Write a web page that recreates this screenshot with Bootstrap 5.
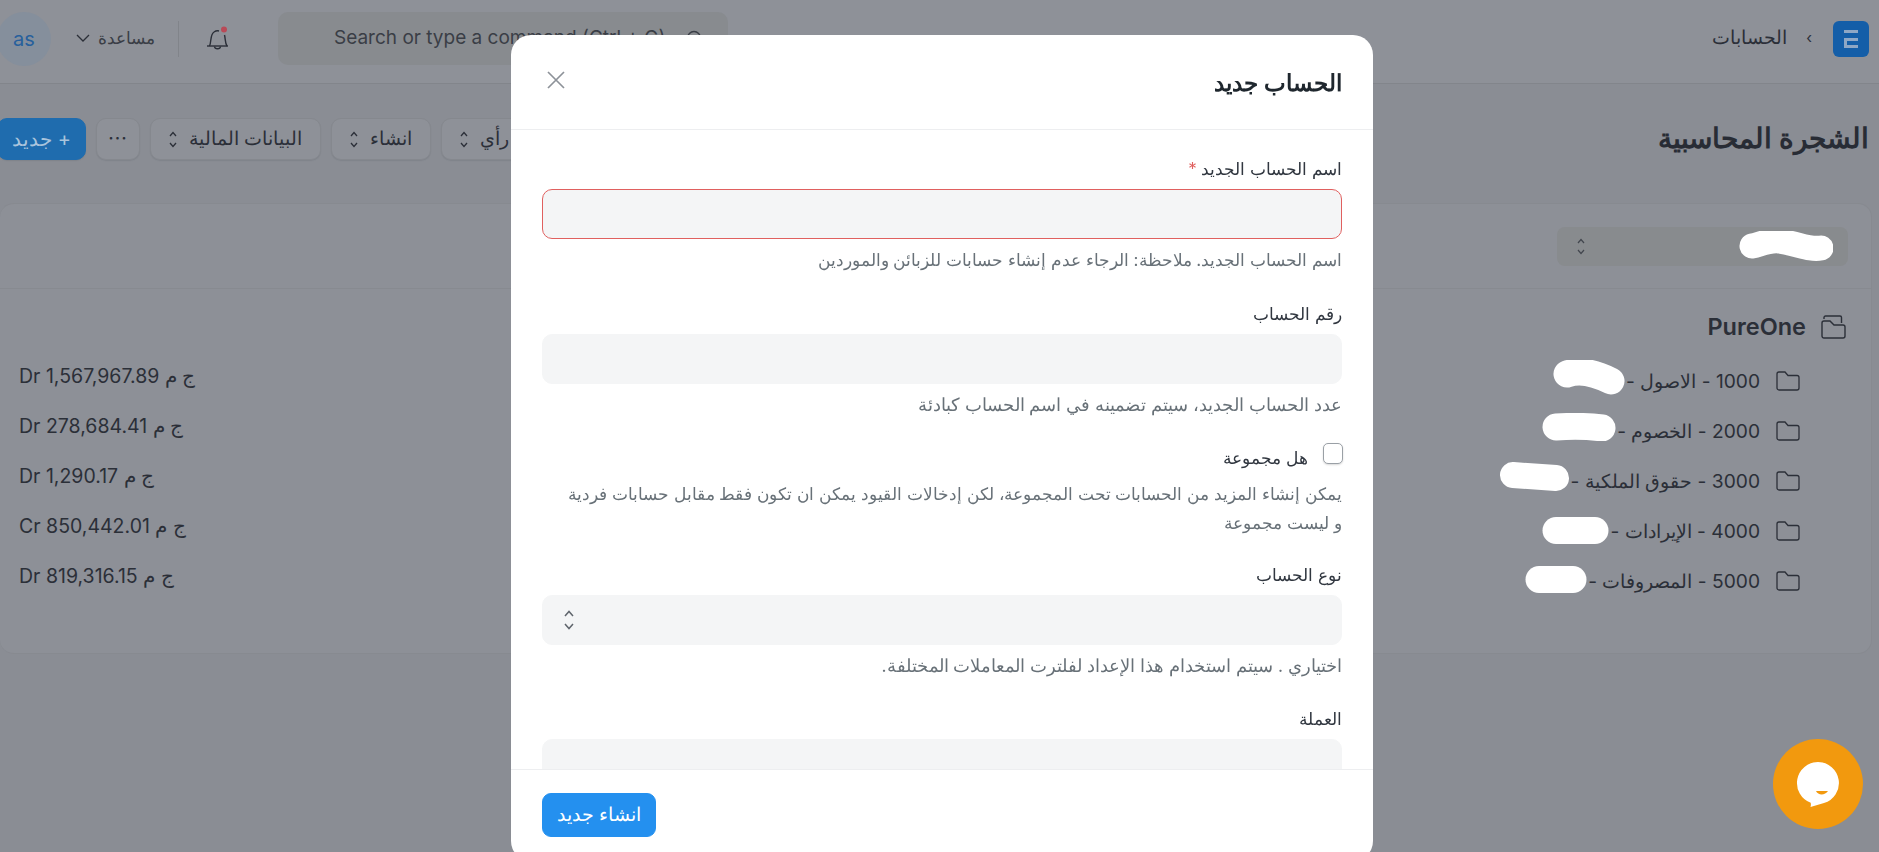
<!DOCTYPE html>
<html lang="ar" dir="rtl">
<head>
<meta charset="utf-8">
<title>الشجرة المحاسبية</title>
<link rel="stylesheet" href="https://cdn.jsdelivr.net/npm/bootstrap@5.3.0/dist/css/bootstrap.min.css">
<style>
html,body{height:100%;overflow:hidden}
body{background:#8a8d94;color:#2b2f38;font-family:Inter,"Noto Sans",sans-serif;font-size:17px}
.app-top{height:84px;padding:0 10px 6px 0;background:#8e9198;border-bottom:1px solid #82858b}
.brand-box{width:36px;height:36px;border-radius:6px;background:#145ea8}
.crumb-sep{margin:0 21px 0 19px;font-size:15px;color:#2b2f38}
.crumb-txt{font-size:19px}
.top-left{margin-left:-3px}
.search-box{width:450px;height:53px;border-radius:10px;background:#888b8f;padding:0 24px 0 22px;font-size:19px;color:#3a3e46;direction:ltr}
.search-txt{margin-left:34px}
.bell-wrap{margin:0 49px 0 27px}
.v-rule{width:1px;height:36px;background:#81848a}
.help-btn{margin:0 23px 0 25px;font-size:17px;color:#3a3e46}
.avatar-circ{width:54px;height:54px;border-radius:50%;background:#858f9c;color:#27609c;font-size:20px}
.head-row{height:119px;padding-bottom:9px}
.head-title{font-size:28.300px;font-weight:700;margin:0 10px 0 0;color:#282c35}
.head-tools{margin-left:-3px;gap:10px}
.tool-btn{height:42px;border-radius:10px;background:#8e9198;border:1px solid #85888e;box-shadow:0 1px 1px rgba(40,45,55,.1);color:#2b2f38;font-size:19px;padding:0 18px;gap:12px}
.tool-btn:hover{background:#8e9198;border-color:#85888e;color:#2b2f38}
.tool-new{background:#1f6cae;border-color:#1f6cae;color:#a9c4dc;width:89px;padding:0 8px;font-size:20px}
.tool-new:hover{background:#1f6cae;border-color:#1f6cae;color:#a9c4dc}
.tool-more{width:44px;padding:0;letter-spacing:1px}
.tree-card{margin-right:7px;width:1872px;height:451px;background:#8d9097;border:1px solid #878a90;border-left:0;border-radius:14px}
.tree-head{height:85px;border-bottom:1px solid #878a90;background:transparent;padding:23px 23px 0 0;border-top:0}
.co-select{width:291px;height:39px;border-radius:8px;background:#888b8e;padding:0 15px 0 20px}
.tree-body{padding:13px 0 0 19px}
.root-row{height:50px;padding-right:25px;font-size:23.500px;font-weight:600;margin-bottom:4px}
.leaf-row{height:50px;padding-right:71px;font-size:19.200px}
.amount-cell{font-size:19.500px;margin-bottom:8px}
.gap-16{gap:15px}
.redact{margin-right:1px;flex:none}
.dlg{width:862px;max-width:862px;margin:35px 0 0 0;margin-right:506px}
.dlg .modal-content{height:826px;border:0;border-radius:20px;overflow:hidden}
.dlg .modal-header{height:95px;padding:0 31px;border-bottom:1px solid #edeef0;flex:none}
.dlg-title{font-size:23px;font-weight:600;color:#1f272e;margin:4px 0 0 0}
.close-x{margin:0 0 5px 5px}
.dlg .modal-body{padding:0 31px;overflow:hidden;flex:1 1 0}
.dlg .modal-footer{height:92px;flex:none;padding:23px 31px 24px 31px;justify-content:flex-end;border-top:1px solid #edeef0}
.dlg .modal-footer>*{margin:0}
.field-lbl{display:block;font-size:17px;color:#313740;margin:0;height:24px;line-height:24px}
.req-star{color:#e0605f}
.soft-input{height:50px;border-radius:10px;background:#f4f5f6;border:1px solid #f4f5f6;margin-top:8px}
.soft-input.bad{border-color:#e0605f}
.hint-txt{font-size:17.500px;color:#687178;line-height:29px;margin-top:6px}
.hint-tight{font-size:17.200px}
.field-first{padding-top:27px}
.field-second{padding-top:28px}
.check-wrap{padding-top:24px}
.check-box{width:20px;height:21px;border:1px solid #9aa0a6;border-radius:5px;box-shadow:0 1px 2px rgba(0,0,0,.15);background:#fff;margin-left:15px;margin-right:-1px;flex:none}
.check-lbl{margin-top:3px}
.check-hint{margin-top:9px;font-size:17.400px;white-space:nowrap}
.field-third{padding-top:26px}
.field-last{padding-top:27px}
.sel-arrow{padding-left:20px}
.submit-btn{width:114px;height:44px;border-radius:9px;background:#2490ef;border-color:#2490ef;color:#fff;font-size:19px;font-weight:500;padding:0}
.chat-fab{position:fixed;left:1773px;top:739px;width:90px;height:90px;border-radius:50%;background:#f2990e;z-index:1060}
</style>
</head>
<body>
<header class="app-top d-flex align-items-center justify-content-between">
  <div class="d-flex align-items-center">
    <div class="brand-box d-flex align-items-center justify-content-center">
      <svg width="14" height="18" viewBox="0 0 14 18"><g fill="#8ea7c5"><rect width="14" height="3"/><rect y="8" width="14" height="3"/><rect y="15" width="14" height="3"/><rect y="8" width="3" height="10"/></g></svg>
    </div>
    <span class="crumb-sep">›</span>
    <span class="crumb-txt">الحسابات</span>
  </div>
  <div class="top-left d-flex align-items-center">
    <div class="search-box d-flex align-items-center justify-content-between order-0">
      <span class="search-txt text-nowrap">Search or type a command (Ctrl + G)</span>
      <svg width="18" height="18" viewBox="0 0 18 18" fill="none" stroke="#3a3e46" stroke-width="1.4"><circle cx="8" cy="8" r="6.5"/><path d="M13 13l4 4"/></svg>
    </div>
    <div class="bell-wrap">
      <svg width="23" height="25" viewBox="0 0 23 25" fill="none" stroke="#2b2f38" stroke-width="1.4"><path d="M1 20h21"/><path d="M3.500 20C5.500 16 4 8.500 8 6c1.500-1 3.500-1.500 5-1"/><path d="M18.500 9c1 4 .5 8 2.500 11"/><path d="M8.500 20.500c.3 3 5.700 3 6 0"/><circle cx="18" cy="3.500" r="3" fill="#b94a57" stroke="none"/></svg>
    </div>
    <div class="v-rule"></div>
    <div class="help-btn d-flex align-items-center gap-2">
      <span>مساعدة</span>
      <svg width="14" height="9" viewBox="0 0 14 9" fill="none" stroke="#2b2f38" stroke-width="1.3"><path d="M1 1l6 6 6-6"/></svg>
    </div>
    <div class="avatar-circ d-flex align-items-center justify-content-center">as</div>
  </div>
</header>

<section class="head-row d-flex align-items-center justify-content-between">
  <h1 class="head-title">الشجرة المحاسبية</h1>
  <div class="head-tools d-flex align-items-center">
    <button class="btn tool-btn d-flex align-items-center"><span>رأي</span><svg width="8" height="17" viewBox="0 0 8 17" fill="none" stroke="#2b2f38" stroke-width="1.3"><path d="M1 5l3-3.500L7 5M1 12l3 3.500 3-3.500"/></svg></button>
    <button class="btn tool-btn d-flex align-items-center"><span>انشاء</span><svg width="8" height="17" viewBox="0 0 8 17" fill="none" stroke="#2b2f38" stroke-width="1.3"><path d="M1 5l3-3.500L7 5M1 12l3 3.500 3-3.500"/></svg></button>
    <button class="btn tool-btn d-flex align-items-center"><span>البيانات المالية</span><svg width="8" height="17" viewBox="0 0 8 17" fill="none" stroke="#2b2f38" stroke-width="1.3"><path d="M1 5l3-3.500L7 5M1 12l3 3.500 3-3.500"/></svg></button>
    <button class="btn tool-btn tool-more">···</button>
    <button class="btn tool-btn tool-new">+ جديد</button>
  </div>
</section>

<main class="card tree-card">
  <div class="card-header tree-head d-flex">
    <div class="co-select d-flex align-items-center justify-content-between">
      <svg width="94" height="32" viewBox="0 0 94 32"><path d="M82 17C70 19 60 13 40 10 30 9 22 13 13 15" fill="none" stroke="#fff" stroke-width="25" stroke-linecap="round"/></svg>
      <svg width="8" height="17" viewBox="0 0 8 17" fill="none" stroke="#42464e" stroke-width="1.2"><path d="M1 5l3-3.500L7 5M1 12l3 3.500 3-3.500"/></svg>
    </div>
  </div>
  <div class="tree-body">
    <div class="root-row d-flex align-items-center gap-16">
      <svg width="25" height="24" viewBox="0 0 25 24" fill="none" stroke="#2b2f38" stroke-width="1.4"><path d="M1 20V8a2 2 0 0 1 2-2h6l4 4h9a2 2 0 0 1 2 2v9a2 2 0 0 1-2 2H3a2 2 0 0 1-2-2z"/><path d="M3 4V2.500A1.500 1.500 0 0 1 4.500 1H19a1.500 1.500 0 0 1 1.500 1.500V8"/></svg>
      <span>PureOne</span>
    </div>
    <div class="leaf-row d-flex align-items-center justify-content-between">
      <div class="d-flex align-items-center"><svg class="ms-3" width="24" height="20" viewBox="0 0 24 20" fill="none" stroke="#2b2f38" stroke-width="1.3"><path d="M1 17V3a2 2 0 0 1 2-2h6l3 3.500h9a2 2 0 0 1 2 2V17a2 2 0 0 1-2 2H3a2 2 0 0 1-2-2z"/></svg><span>1000 - الاصول -</span><svg class="redact mb-2" width="72" height="35" viewBox="0 0 72 35"><path d="M58 21C40 12 25 10 14 14" fill="none" stroke="#fff" stroke-width="27" stroke-linecap="round"/></svg></div>
      <div class="amount-cell">ج م 1,567,967.89 Dr</div>
    </div>
    <div class="leaf-row d-flex align-items-center justify-content-between">
      <div class="d-flex align-items-center"><svg class="ms-3" width="24" height="20" viewBox="0 0 24 20" fill="none" stroke="#2b2f38" stroke-width="1.3"><path d="M1 17V3a2 2 0 0 1 2-2h6l3 3.500h9a2 2 0 0 1 2 2V17a2 2 0 0 1-2 2H3a2 2 0 0 1-2-2z"/></svg><span>2000 - الخصوم -</span><svg class="redact mb-2" width="74" height="28" viewBox="0 0 74 28"><path d="M60 15C45 13 30 13 14 14" fill="none" stroke="#fff" stroke-width="27" stroke-linecap="round"/></svg></div>
      <div class="amount-cell">ج م 278,684.41 Dr</div>
    </div>
    <div class="leaf-row d-flex align-items-center justify-content-between">
      <div class="d-flex align-items-center"><svg class="ms-3" width="24" height="20" viewBox="0 0 24 20" fill="none" stroke="#2b2f38" stroke-width="1.3"><path d="M1 17V3a2 2 0 0 1 2-2h6l3 3.500h9a2 2 0 0 1 2 2V17a2 2 0 0 1-2 2H3a2 2 0 0 1-2-2z"/></svg><span>3000 - حقوق الملكية -</span><svg class="redact mb-2" width="70" height="30" viewBox="0 0 70 30"><path d="M56 16C42 15 28 14 13 13" fill="none" stroke="#fff" stroke-width="26" stroke-linecap="round"/></svg></div>
      <div class="amount-cell">ج م 1,290.17 Dr</div>
    </div>
    <div class="leaf-row d-flex align-items-center justify-content-between">
      <div class="d-flex align-items-center"><svg class="ms-3" width="24" height="20" viewBox="0 0 24 20" fill="none" stroke="#2b2f38" stroke-width="1.3"><path d="M1 17V3a2 2 0 0 1 2-2h6l3 3.500h9a2 2 0 0 1 2 2V17a2 2 0 0 1-2 2H3a2 2 0 0 1-2-2z"/></svg><span>4000 - الإيرادات -</span><svg class="redact" width="67" height="27" viewBox="0 0 67 27"><path d="M53 13.500H14" fill="none" stroke="#fff" stroke-width="27" stroke-linecap="round"/></svg></div>
      <div class="amount-cell">ج م 850,442.01 Cr</div>
    </div>
    <div class="leaf-row d-flex align-items-center justify-content-between">
      <div class="d-flex align-items-center"><svg class="ms-3" width="24" height="20" viewBox="0 0 24 20" fill="none" stroke="#2b2f38" stroke-width="1.3"><path d="M1 17V3a2 2 0 0 1 2-2h6l3 3.500h9a2 2 0 0 1 2 2V17a2 2 0 0 1-2 2H3a2 2 0 0 1-2-2z"/></svg><span>5000 - المصروفات -</span><svg class="redact mb-1" width="62" height="27" viewBox="0 0 62 27"><path d="M48 13.500H14" fill="none" stroke="#fff" stroke-width="27" stroke-linecap="round"/></svg></div>
      <div class="amount-cell">ج م 819,316.15 Dr</div>
    </div>
  </div>
</main>

<div class="modal d-block" tabindex="-1">
  <div class="modal-dialog dlg">
    <div class="modal-content">
      <div class="modal-header d-flex align-items-center justify-content-between">
        <h5 class="dlg-title">الحساب جديد</h5>
        <svg class="close-x" width="18" height="18" viewBox="0 0 18 18" fill="none" stroke="#8d9299" stroke-width="1.7"><path d="M1 1l16 16M17 1L1 17"/></svg>
      </div>
      <div class="modal-body">
        <div class="field-first">
          <label class="field-lbl">اسم الحساب الجديد <span class="req-star">*</span></label>
          <div class="soft-input bad"></div>
          <div class="hint-txt hint-tight">اسم الحساب الجديد. ملاحظة: الرجاء عدم إنشاء حسابات للزبائن والموردين</div>
        </div>
        <div class="field-second">
          <label class="field-lbl">رقم الحساب</label>
          <div class="soft-input"></div>
          <div class="hint-txt">عدد الحساب الجديد، سيتم تضمينه في اسم الحساب كبادئة</div>
        </div>
        <div class="check-wrap">
          <div class="d-flex align-items-start"><span class="check-box d-block"></span><span class="field-lbl check-lbl">هل مجموعة</span></div>
          <div class="hint-txt check-hint">يمكن إنشاء المزيد من الحسابات تحت المجموعة، لكن إدخالات القيود يمكن ان تكون فقط مقابل حسابات فردية<br>و ليست مجموعة</div>
        </div>
        <div class="field-third">
          <label class="field-lbl">نوع الحساب</label>
          <div class="soft-input sel-arrow d-flex align-items-center justify-content-end">
            <svg width="12" height="20" viewBox="0 0 12 20" fill="none" stroke="#5f656c" stroke-width="1.500"><path d="M2 6l4-4.500L10 6M2 14l4 4.500 4-4.500"/></svg>
          </div>
          <div class="hint-txt">اختياري . سيتم استخدام هذا الإعداد لفلترت المعاملات المختلفة.</div>
        </div>
        <div class="field-last">
          <label class="field-lbl">العملة</label>
          <div class="soft-input"></div>
        </div>
      </div>
      <div class="modal-footer">
        <button class="btn submit-btn">انشاء جديد</button>
      </div>
    </div>
  </div>
</div>

<div class="chat-fab d-flex align-items-center justify-content-center">
  <svg width="50" height="50" viewBox="0 0 50 50"><path d="M25 3a21 21 0 0 1 6 41.100L17.500 48c.5-1.500.5-3 .2-4.300A21 21 0 0 1 25 3z" fill="#fff"/><path d="M23 32c2 4.500 9 4.500 12 0z" fill="#f2990e"/></svg>
</div>
<script src="https://cdn.jsdelivr.net/npm/bootstrap@5.3.0/dist/js/bootstrap.bundle.min.js"></script>
</body>
</html>
